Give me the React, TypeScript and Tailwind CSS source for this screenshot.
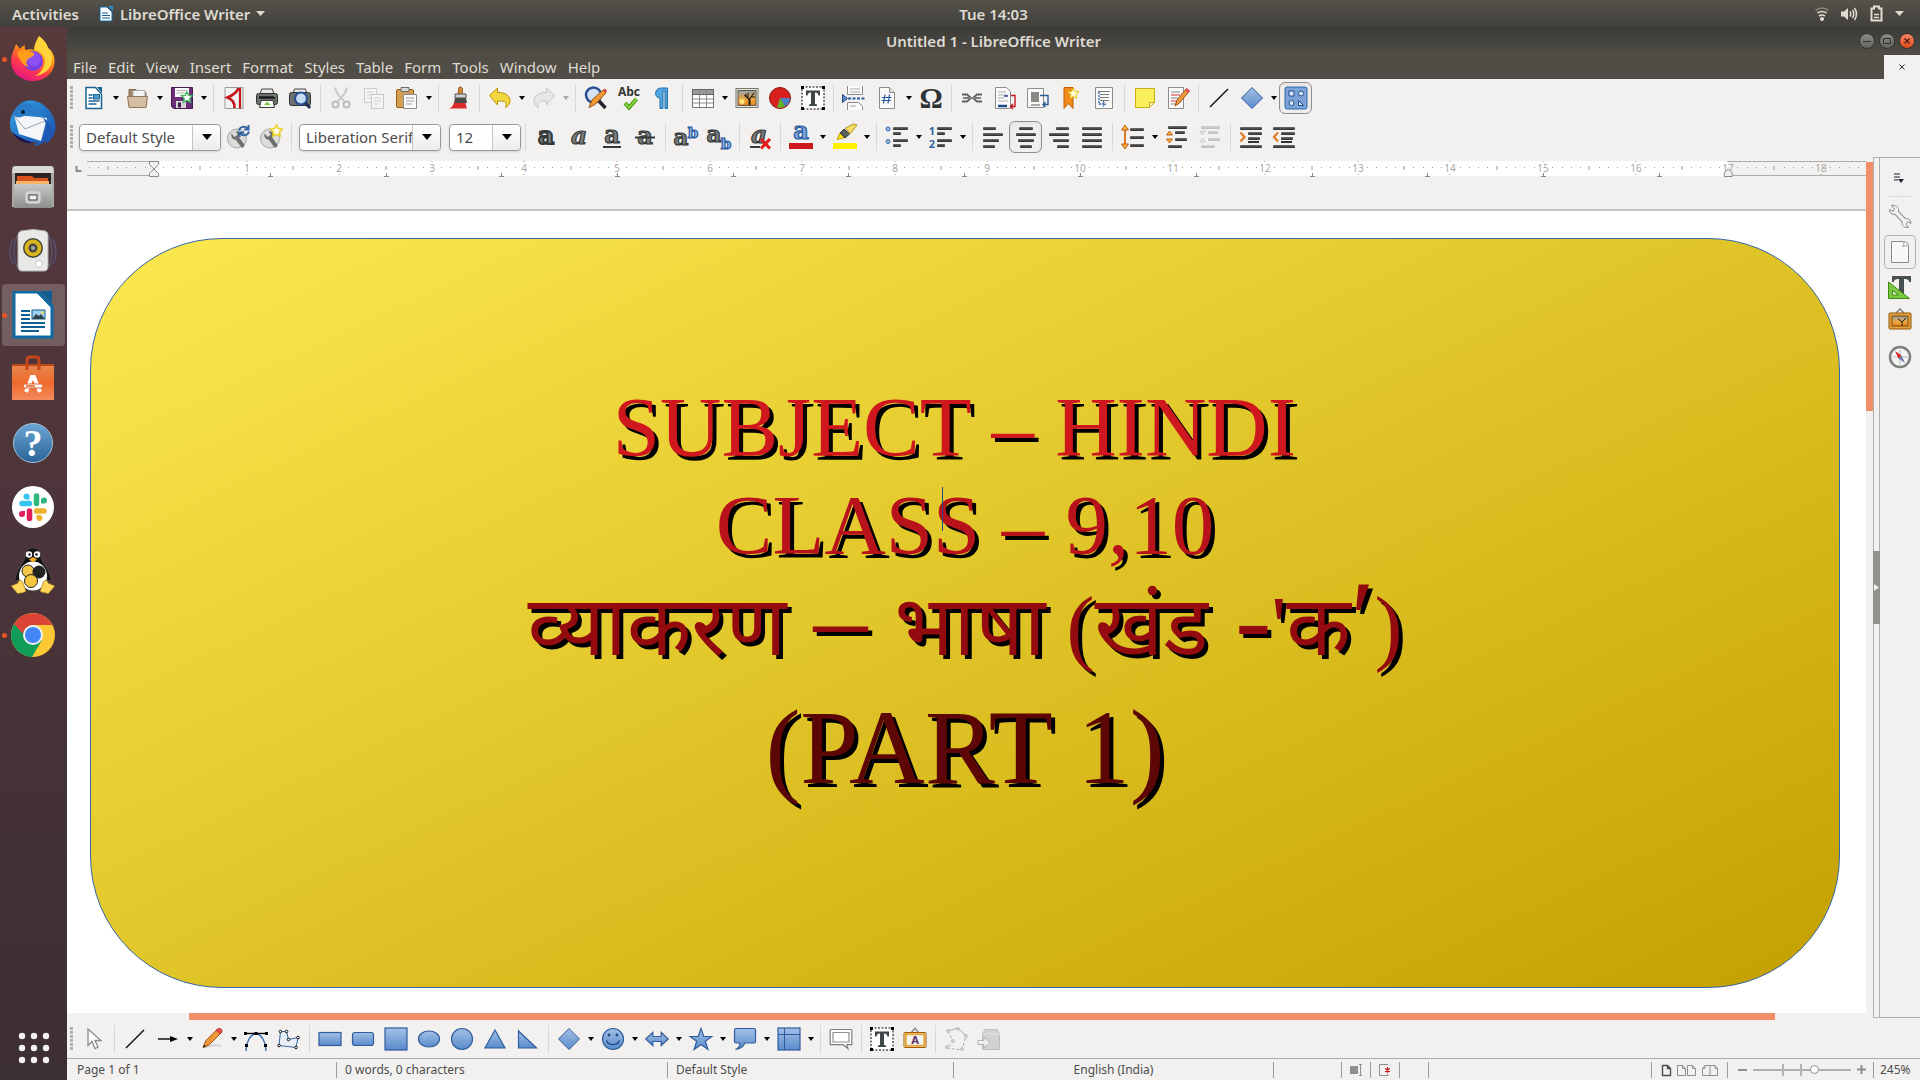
import React from "react";

type Kids = { children?: React.ReactNode };

const Ico = ({ children }: Kids) => (
  <svg width="24" height="24" viewBox="0 0 24 24" fill="none" className="shrink-0 overflow-visible" aria-hidden="true">
    {children}
  </svg>
);

const Defs = () => (
  <svg width="0" height="0" className="absolute" aria-hidden="true">
    <defs>
      <linearGradient id="blue" x1="0" y1="0" x2="0" y2="1">
        <stop offset="0" stopColor="#a3c0e6" />
        <stop offset="1" stopColor="#5a8bcb" />
      </linearGradient>
      <linearGradient id="fox" x1="0.8" y1="0" x2="0.3" y2="1">
        <stop offset="0" stopColor="#fff04a" />
        <stop offset="0.4" stopColor="#ff980e" />
        <stop offset="0.7" stopColor="#ff3a4a" />
        <stop offset="1" stopColor="#e31587" />
      </linearGradient>
      <linearGradient id="bird" x1="0" y1="0" x2="1" y2="1">
        <stop offset="0" stopColor="#2fa5e8" />
        <stop offset="1" stopColor="#1b4aa8" />
      </linearGradient>
      <linearGradient id="steel" x1="0" y1="0" x2="0" y2="1">
        <stop offset="0" stopColor="#c8c8c6" />
        <stop offset="1" stopColor="#8d8d8b" />
      </linearGradient>
      <linearGradient id="bag" x1="0" y1="0" x2="0" y2="1">
        <stop offset="0" stopColor="#e8854c" />
        <stop offset="0.5" stopColor="#ee6a2c" />
        <stop offset="1" stopColor="#f58a5c" />
      </linearGradient>
      <linearGradient id="help" x1="0" y1="0" x2="0" y2="1">
        <stop offset="0" stopColor="#6ba7d6" />
        <stop offset="1" stopColor="#2a6398" />
      </linearGradient>
      <linearGradient id="sky" x1="0" y1="0" x2="0" y2="1">
        <stop offset="0" stopColor="#8f9fa8" />
        <stop offset="0.6" stopColor="#f0a83c" />
        <stop offset="1" stopColor="#e8801c" />
      </linearGradient>
      <linearGradient id="bar" x1="0" y1="0" x2="0" y2="1">
        <stop offset="0" stopColor="#6e6e6e" />
        <stop offset="1" stopColor="#2a2a2a" />
      </linearGradient>
    </defs>
  </svg>
);

/* ---------- document and edit icons ---------- */

const Paper = ({ stroke = "#8c8c8a" }: { stroke?: string }) => (
  <path d="M4.5 1.5h10l5 5v16h-15z" fill="#fafafa" stroke={stroke} />
);

const IconNew = () => (
  <Ico>
    <path d="M4 1.5h9.5l6 6.5v14.500H4z" fill="#fff" stroke="#1a6391" strokeWidth="1.500" />
    <path d="M15 1h5v6z" fill="#1a6391" />
    <path d="M6.500 9h4M6.500 12h4M6.500 15h11M6.500 18h8" stroke="#1a6391" strokeWidth="1.400" />
    <rect x="11.500" y="8.500" width="6" height="4.500" fill="#4f9bd0" stroke="#1a6391" />
  </Ico>
);
const IconOpen = () => (
  <Ico>
    <path d="M3 20V3.500h7l1.500 3H20V20z" fill="#a6866a" stroke="#7d634c" />
    <path d="M7 4.500h12v6H7z" fill="#f2f2f2" stroke="#a8a8a8" />
    <path d="M1.500 10.500h20l-1.500 11H3z" fill="#d3bda3" stroke="#927457" />
  </Ico>
);
const IconSave = () => (
  <Ico>
    <path d="M1.500 1.500h21v21h-19l-2-2z" fill="#6b2f7a" stroke="#451a52" />
    <rect x="5" y="2" width="14" height="9" fill="#f5f5f5" />
    <path d="M6.500 4.500h11M6.500 7h11" stroke="#b5b5b5" />
    <rect x="6" y="15" width="10" height="7" fill="#d5d5d5" />
    <rect x="8" y="16.500" width="3" height="5" fill="#451a52" />
    <path d="m17 6 1.700 3.300 3.800.4-2.800 2.700.8 3.800-3.500-1.800-3.500 1.800.8-3.800-2.800-2.700 3.800-.4z" fill="#fff" stroke="#35b558" strokeWidth="1.300" />
  </Ico>
);
const IconPdf = () => (
  <Ico>
    <path d="M3 1.500h18v21H3z" fill="#f2f2f2" stroke="#9a9a9a" />
    <path d="M16.500 2c-2 5.500-6 7.500-11 9.500 5 2 7.500 5 7 10.500" stroke="#c4161c" strokeWidth="2.600" />
    <path d="M18 2v20.500" stroke="#c4161c" strokeWidth="2.200" />
  </Ico>
);
const IconPrint = () => (
  <Ico>
    <path d="M5 9 6.500 3h11L19 9z" fill="#e9e9e9" stroke="#444" />
    <rect x="1.500" y="7.500" width="21" height="11" rx="2" fill="#6d706c" stroke="#2e3436" />
    <path d="M4 11.500h16" stroke="#171a1a" strokeWidth="2.500" />
    <path d="M6 14.500h12l1.500 7h-15z" fill="#f6fbf2" stroke="#3c3f3c" />
    <path d="m9 19 3-3 4 3z" fill="#71c837" />
    <circle cx="19.500" cy="10" r=".8" fill="#73d216" />
  </Ico>
);
const IconPreview = () => (
  <Ico>
    <path d="M5 8 6.500 3h11L19 8z" fill="#e9e9e9" stroke="#444" />
    <rect x="1.500" y="6.500" width="21" height="13" rx="2" fill="#6d706c" stroke="#2e3436" />
    <circle cx="13" cy="12.500" r="6" fill="#c6dcf2" stroke="#2a4f92" strokeWidth="2.200" />
    <path d="m17.500 17 4.500 5" stroke="#1d2c50" strokeWidth="2.800" />
  </Ico>
);
const IconCut = () => (
  <Ico>
    <path d="M6 1.500c1 5 4 9 9 13.500M18 1.500c-1 5-4 9-9 13.500" stroke="#c9c9c7" strokeWidth="2" />
    <circle cx="6.500" cy="18.500" r="3" stroke="#bdbdbb" strokeWidth="2" />
    <circle cx="17.500" cy="18.500" r="3" stroke="#bdbdbb" strokeWidth="2" />
  </Ico>
);
const IconCopy = () => (
  <Ico>
    <path d="M2.500 2.500h12v14h-12z" fill="#f4f4f3" stroke="#cbcbc9" />
    <path d="M5 6h7M5 9h7M5 12h4" stroke="#cfcfcd" />
    <path d="M9.500 8.500h12v14h-12z" fill="#f4f4f3" stroke="#c6c6c4" />
    <path d="M12 12h7M12 15h7M12 18h5" stroke="#cfcfcd" />
  </Ico>
);
const IconPaste = () => (
  <Ico>
    <rect x="1.500" y="3.500" width="17" height="18" rx="1.500" fill="#d59f52" stroke="#8f5f1c" />
    <path d="M6 1.500h8v4H6z" fill="#d8d8d6" stroke="#6d6d6b" />
    <path d="M8.500 8.500h13v14h-13z" fill="#fafafa" stroke="#8c8c8a" />
    <path d="M11 12h8M11 15h8M11 18h6" stroke="#9a9a98" />
  </Ico>
);
const IconBrush = () => (
  <Ico>
    <path d="M1 22.500c5-.5 5-4 7-8h10c1 4 1 6 2 8z" fill="#dd2a2a" />
    <path d="M12 1.500c1.500-1 4 0 3.500 2l-.5 5h-4z" fill="#d98d37" stroke="#8a4f13" />
    <path d="M8 8h11v4H8z" fill="#d0d0ce" stroke="#555" />
    <path d="M8 12h11l1 5H7z" fill="#4a4a4a" />
  </Ico>
);
const IconUndo = () => (
  <Ico>
    <path d="m1.500 9.500 8-7.500v4.500c8-.5 13 4 12.500 9-.5 3-2.500 5-4.500 6 1.500-4.500 1-7-8-6.500V19z" fill="#f3d740" stroke="#b99500" strokeLinejoin="round" />
  </Ico>
);
const IconRedo = () => (
  <Ico>
    <path d="m22.500 9.500-8-7.500v4.500c-8-.5-13 4-12.500 9 .5 3 2.500 5 4.500 6-1.500-4.500-1-7 8-6.500V19z" fill="#e6e6e4" stroke="#c6c6c4" strokeLinejoin="round" />
  </Ico>
);
const IconFind = () => (
  <Ico>
    <circle cx="9.500" cy="9" r="7.500" fill="#d4e4f4" stroke="#2a4f92" strokeWidth="2.500" />
    <path d="m15 15 6.500 7" stroke="#23262e" strokeWidth="3.500" />
    <path d="M5 21.500 8 14l11-10 3 3-11 11.500z" fill="#f39a34" stroke="#9c5312" />
    <path d="m19 4 2-1.500 2 2L22 7z" fill="#e24b4b" />
  </Ico>
);
const IconSpell = () => (
  <Ico>
    <text x="12" y="10" textAnchor="middle" fontFamily="Open Sans, sans-serif" fontWeight="700" fontSize="12" fill="#333">Abc</text>
    <path d="m8 17 4 4.500 7.500-8.500" stroke="#3f8f10" strokeWidth="4" />
    <path d="m8 17 4 4.500 7.500-8.500" stroke="#84d43a" strokeWidth="2" />
  </Ico>
);
const IconPilcrow = () => (
  <Ico>
    <path d="M17 2H11c-7 0-7 10-1 10v10.500h3V5h2v17.500h2.500V2z" fill="#52a5dd" stroke="#1f6fab" />
  </Ico>
);
const IconTable = () => (
  <Ico>
    <rect x="1.500" y="3.500" width="21" height="18" fill="#fff" stroke="#777" />
    <rect x="1.500" y="3.500" width="21" height="5" fill="#9a9a98" stroke="#666" />
    <path d="M2 13h20M2 17h20M8.500 4v17M15.500 4v17" stroke="#8a8a88" />
  </Ico>
);
const IconImage = () => (
  <Ico>
    <rect x="1" y="2.500" width="22" height="19" fill="#e8e6df" stroke="#77756c" />
    <rect x="3" y="4.500" width="18" height="15" fill="url(#sky)" stroke="#5c5b50" />
    <circle cx="7" cy="15.500" r="2.500" fill="#ffe97a" />
    <path d="M14.500 19v-6" stroke="#221a10" strokeWidth="2" />
    <path d="M14.500 14l-5-5M14.500 13l4.500-6M13 12V7M16 11h4M11 10.500V8" stroke="#221a10" strokeWidth="1.100" />
  </Ico>
);
const IconChart = () => (
  <Ico>
    <circle cx="12" cy="12" r="10.500" fill="#d8201f" stroke="#8f1211" />
    <path d="M12 12h10a10 10 0 0 1-5 8.600z" fill="#4b80c2" />
    <path d="m12 12 5 8.600a10 10 0 0 1-8 1z" fill="#62b52a" />
  </Ico>
);
const IconTextBox = () => (
  <Ico>
    <rect x="1" y="1" width="22" height="22" fill="#fff" stroke="#000" strokeDasharray="2 1.500" />
    <path d="M0 0h3v3H0zM21 0h3v3h-3zM0 21h3v3H0zM21 21h3v3h-3z" fill="#000" />
    <path d="M5 4.500h14v5h-1.500c-.5-2-1-3-3.500-3V18l2 .5v1.500H8v-1.500l2-.5V6.500c-2.500 0-3 1-3.500 3H5z" fill="#3f4648" />
  </Ico>
);
const IconBreak = () => (
  <Ico>
    <path d="M5.500 0v8.500h15V0M5.500 24v-7.500h11l4 4V24" fill="#fafafa" stroke="#8c8c8a" />
    <path d="M8 3h10M8 6h10M8 20h6" stroke="#aaa" />
    <path d="M6 12.500h18" stroke="#2a5a9c" strokeWidth="2" strokeDasharray="3 1.500" />
    <path d="m.5 8.500 5 4-5 4z" fill="#5a8bcb" stroke="#204a87" />
  </Ico>
);
const IconField = () => (
  <Ico>
    <Paper />
    <path d="M14.500 1.500v5h5" fill="#dedede" stroke="#8c8c8a" />
    <path d="m10 8.500-1.500 9M14.500 8.500 13 17.500M7 11.500h9.500M6.500 14.500H16" stroke="#2a5a9c" strokeWidth="1.200" />
  </Ico>
);
const IconOmega = () => (
  <Ico>
    <text x="12" y="22" textAnchor="middle" fontFamily="Liberation Serif, serif" fontWeight="700" fontSize="29" fill="#2e3436">Ω</text>
  </Ico>
);
const IconLink = () => (
  <Ico>
    <path d="M2 8.500h5l4 3.500-4 3.500H2M22 8.500h-5L13 12l4 3.500h5" stroke="#5e6160" strokeWidth="1.800" />
    <path d="M3 12h18" stroke="#7c7f7c" strokeWidth="2" />
  </Ico>
);
const IconFootnote = () => (
  <Ico>
    <path d="M2.500 1.500h11l4 4v17h-15z" fill="#fafafa" stroke="#8c8c8a" />
    <path d="M5 6h8M5 9h10M5 12h6M5 15h10" stroke="#aaa" />
    <path d="M11 10h4" stroke="#204a87" strokeWidth="1.500" />
    <path d="M5 20h9" stroke="#204a87" strokeWidth="2.500" />
    <path d="M18 9.500h4v11h-4.500m2.500-2.500-2.500 2.500L20 23" stroke="#c4161c" strokeWidth="1.400" />
  </Ico>
);
const IconEndnote = () => (
  <Ico>
    <path d="M1.500 2.500h16v19h-16z" fill="#fafafa" stroke="#8c8c8a" />
    <rect x="5" y="6" width="8" height="10" fill="#888a85" />
    <path d="M5 19h9" stroke="#aaa" strokeWidth="2" />
    <path d="M14 9.500h8v9h-5m2.500-2.500-2.500 2.500 2.500 2.500" stroke="#2a5a9c" strokeWidth="1.400" />
  </Ico>
);
const IconBookmark = () => (
  <Ico>
    <path d="M5 1.500h9v21l-4.500-5-4.500 5z" fill="#f08a1d" stroke="#c45f00" />
    <path d="m14.500 2 1.700 3.300 3.800.5-2.800 2.700.7 3.800-3.400-1.800-3.400 1.800.7-3.800L9 5.800l3.800-.5z" fill="#fffbd0" stroke="#e2c200" />
  </Ico>
);
const IconCrossRef = () => (
  <Ico>
    <path d="M3.500 1.500h17v21h-17z" fill="#fafafa" stroke="#8c8c8a" />
    <path d="M6 5.500h12M8 8.500h9M8 11.500h9M8 14.500h9" stroke="#777" />
    <path d="M7 6v12h6m-2-2.500 2.500 2.500L11 20.500" stroke="#2a5a9c" strokeWidth="1.300" strokeDasharray="2 1" />
  </Ico>
);
const IconNote = () => (
  <Ico>
    <path d="M2.500 2.500h19v14l-5 5h-14z" fill="#f9ee5c" stroke="#c9ad14" />
    <path d="M21.500 16.500h-5v5z" fill="#fdf8b5" stroke="#c9ad14" />
  </Ico>
);
const IconTrack = () => (
  <Ico>
    <path d="M2.500 1.500h15v21h-15z" fill="#fafafa" stroke="#8c8c8a" />
    <path d="M5 6h9M5 12h7M5 18h7" stroke="#888" />
    <path d="M5 9h9M5 15h6" stroke="#d33" />
    <path d="m9 20 2-6L20 3l3 2.500L13.500 17z" fill="#f09a3c" stroke="#9c5312" />
    <path d="m19 4 1.500-2L24 4.500 22.500 7z" fill="#e24b4b" />
  </Ico>
);
const IconLine = () => (
  <Ico>
    <path d="M3 21 21 3" stroke="#111" strokeWidth="1.400" />
  </Ico>
);
const IconDiamond = () => (
  <Ico>
    <path d="m12 1.500 10.500 10.500L12 22.500 1.500 12z" fill="url(#blue)" stroke="#2f5c9c" />
  </Ico>
);
const IconShapes = () => (
  <Ico>
    <rect x="1" y="1" width="22" height="22" rx="2" fill="#7ba3d9" stroke="#3465a4" />
    <path d="M5 5h5v5H5zM14.500 19.500v-5l5 5z" fill="#dce9f8" stroke="#204a87" />
    <circle cx="17" cy="7.500" r="2.500" fill="#dce9f8" stroke="#204a87" />
    <circle cx="7.500" cy="17" r="2.500" fill="#dce9f8" stroke="#204a87" />
  </Ico>
);

/* ---------- formatting icons ---------- */

const glyph = {
  fontFamily: "DejaVu Serif, Liberation Serif, serif",
  fontWeight: 700,
  textAnchor: "middle" as const,
  fill: "#7b7e7d",
  stroke: "#34383a",
  strokeWidth: 1.2,
};

const IconStyle = ({ add }: { add?: boolean }) => (
  <Ico>
    <circle cx="11" cy="13.500" r="9.500" fill="#dcdcda" stroke="#a5a5a3" />
    <path d="m11 13 5.500 7.500" stroke="#6d6f6e" strokeWidth="4" strokeLinecap="round" />
    <path d="M5.500 8.500c-1 4 2 7 6 6l2.500-3c1-3-1-5.500-4-5.500l1.500 4-3 2z" fill="#6d6f6e" />
    {add ? (
      <path d="m17.500 0 1.900 3.400 3.900.8-2.700 2.900.5 3.900-3.600-1.700-3.600 1.700.5-3.900-2.700-2.900 3.900-.8z" fill="#fffce0" stroke="#e6cf1c" strokeWidth="1.500" />
    ) : (
      <path d="M13 5.500c1-4 6-5 8.500-2M22.500 0v4.500H18M23 6.500c-1 4-6 5-8.500 2M13.500 12V7.500H18" stroke="#3465a4" strokeWidth="2" />
    )}
  </Ico>
);
const IconBold = () => (
  <Ico>
    <text x="12" y="19" fontSize="25" {...glyph} strokeWidth={2}>a</text>
  </Ico>
);
const IconItalic = () => (
  <Ico>
    <text x="12" y="19" fontSize="25" {...glyph} fontStyle="italic">a</text>
  </Ico>
);
const IconUnder = () => (
  <Ico>
    <text x="12" y="18" fontSize="24" {...glyph}>a</text>
    <path d="M3 22h18" stroke="#34383a" strokeWidth="2" />
  </Ico>
);
const IconStrike = () => (
  <Ico>
    <text x="12" y="19" fontSize="24" {...glyph}>a</text>
    <path d="M2 12.500h20" stroke="#34383a" strokeWidth="2" />
  </Ico>
);
const IconSup = () => (
  <Ico>
    <text x="7" y="20" fontSize="23" {...glyph}>a</text>
    <text x="19" y="13" fontSize="15" {...glyph} fill="#9cc0ea" stroke="#2a5a9c">b</text>
  </Ico>
);
const IconSub = () => (
  <Ico>
    <text x="7" y="17" fontSize="23" {...glyph}>a</text>
    <text x="19" y="24" fontSize="15" {...glyph} fill="#9cc0ea" stroke="#2a5a9c">b</text>
  </Ico>
);
const IconClear = () => (
  <Ico>
    <text x="11" y="18" fontSize="25" {...glyph} fontStyle="italic">a</text>
    <path d="M2 22h10" stroke="#34383a" strokeWidth="2" />
    <path d="m13 14 9 9.500M22 14l-9 9.500" stroke="#e0201f" strokeWidth="3.200" />
  </Ico>
);
const IconFontColor = () => (
  <Ico>
    <text x="12" y="14" fontSize="24" {...glyph} fill="#7ba3d9" stroke="#2a5a9c">a</text>
    <path d="M0 18h24v6H0z" fill="#ce181e" />
  </Ico>
);
const IconHighlight = () => (
  <Ico>
    <path d="M4 14.500 7 8l5 4.500z" fill="#fbe50a" stroke="#b3a000" />
    <path d="m7 8 4-4 5.500 5-4.500 4z" fill="#5a5d5b" stroke="#333" />
    <path d="m12 3.500 8-4.500 4 1-6.500 8.500z" fill="#f5dc6a" stroke="#b3961a" />
    <path d="M0 18h24v6H0z" fill="#fff200" />
  </Ico>
);
const bars = (rows: [number, number, number][]) =>
  rows.map(([x, y, w]) => <rect key={y} x={x} y={y} width={w} height="3" rx="1" fill="url(#bar)" />);
const IconBullets = () => (
  <Ico>
    <circle cx="3" cy="4" r="2" fill="#9cc0ea" stroke="#3465a4" />
    <circle cx="3" cy="16.500" r="2" fill="#9cc0ea" stroke="#3465a4" />
    {bars([[8, 2, 15], [8, 7, 8], [8, 14, 15], [8, 19, 8]])}
  </Ico>
);
const IconNumbers = () => (
  <Ico>
    <text x="3" y="10" textAnchor="middle" fontFamily="Open Sans, sans-serif" fontWeight="700" fontSize="11" fill="#3465a4">1</text>
    <text x="3" y="23" textAnchor="middle" fontFamily="Open Sans, sans-serif" fontWeight="700" fontSize="11" fill="#3465a4">2</text>
    {bars([[8, 2, 15], [8, 7, 8], [8, 14, 15], [8, 19, 8]])}
  </Ico>
);
const IconLeft = () => <Ico>{bars([[2, 2, 13], [2, 8, 20], [2, 14, 16], [2, 20, 12]])}</Ico>;
const IconCenter = () => <Ico>{bars([[5, 2, 14], [2, 8, 20], [4, 14, 16], [6, 20, 12]])}</Ico>;
const IconRight = () => <Ico>{bars([[9, 2, 13], [2, 8, 20], [6, 14, 16], [10, 20, 12]])}</Ico>;
const IconJustify = () => <Ico>{bars([[2, 2, 20], [2, 8, 20], [2, 14, 20], [2, 20, 20]])}</Ico>;
const IconSpacing = () => (
  <Ico>
    <path d="M4 5v14" stroke="#d9772b" strokeWidth="2" />
    <path d="M4 0 7.500 5H.5zM4 24l3.500-5H.5z" fill="#fcaf3e" stroke="#c4621a" />
    {bars([[9, 3, 14], [9, 11, 14], [9, 19, 14]])}
  </Ico>
);
const IconParaUp = () => (
  <Ico>
    {bars([[3, 1, 19], [10, 6, 10], [10, 13, 12], [3, 20, 14]])}
    <path d="m4.500 6 3 4h-6zM4.500 18l3-4h-6z" fill="#fcaf3e" stroke="#c4621a" />
  </Ico>
);
const IconParaDown = () => (
  <Ico>
    <g opacity=".25">
      {bars([[3, 1, 19], [10, 6, 10], [10, 13, 12], [3, 20, 14]])}
      <path d="m4.500 10 3-4h-6zM4.500 13l3 4h-6z" fill="#bbb" stroke="#777" />
    </g>
  </Ico>
);
const IconIndent = () => (
  <Ico>
    {bars([[1, 2, 22], [9, 7, 14], [9, 12, 12], [1, 20, 22]])}
    <path d="M9 17h11" stroke="#333" strokeWidth="2" />
    <path d="m1.500 7.500 4 4.500-4 4.500" stroke="#e07a20" strokeWidth="2.200" />
  </Ico>
);
const IconOutdent = () => (
  <Ico>
    {bars([[1, 2, 22], [9, 7, 14], [9, 12, 12], [1, 20, 22]])}
    <path d="M9 17h11" stroke="#333" strokeWidth="2" />
    <path d="m6 7.500-4 4.500 4 4.500" stroke="#e07a20" strokeWidth="2.200" />
  </Ico>
);

/* ---------- drawing icons ---------- */

const blue = { fill: "url(#blue)", stroke: "#2f5c9c", strokeWidth: 1.2 };
const IconPointer = () => (
  <Ico>
    <path d="M6 2v16.500l4-4 3 7 3-1.500-3-6.500h6z" fill="#fff" stroke="#8a8c89" strokeWidth="1.300" />
  </Ico>
);
const IconArrow = () => (
  <Ico>
    <path d="M2 12h14" stroke="#000" strokeWidth="1.400" />
    <path d="m14 9 8 3-8 3z" fill="#000" />
  </Ico>
);
const IconPencil = () => (
  <Ico>
    <path d="M4 21c6-2 10-4 17-2" stroke="#bbb" />
    <path d="m3 20.500 3-7L17.500 2l4 3.500-12 12z" fill="#f2973a" stroke="#9c5312" />
    <path d="m16 3.500 2-2c2-1 5 1 4 3.500l-2 2z" fill="#e24b4b" stroke="#a33" strokeWidth=".6" />
    <path d="m3 20.500 1-3 2 1.800z" fill="#222" />
  </Ico>
);
const IconCurve = () => (
  <Ico>
    <path d="M2 24c0-8 4-17 10-17s10 9 10 17" stroke="#3465a4" strokeWidth="1.300" />
    <path d="M1 6.500h22" stroke="#000" strokeWidth="1.400" />
    <path d="M0 5h3v3H0zM10.500 5h3v3h-3zM21 5h3v3h-3zM1 17h3v3H1zM20 17h3v3h-3z" fill="#000" />
  </Ico>
);
const nodes = (pts: number[][], color: string) =>
  pts.map(([x, y]) => <circle key={x + "-" + y} cx={x} cy={y} r="1.300" fill="#fff" stroke={color} />);
const IconPolygon = () => (
  <Ico>
    <path d="M3.500 4.500h6l2 8 9.500-2-2 10-17-2z" fill="#e8eef6" stroke="#3465a4" />
    {nodes([[3.5, 4.5], [9.5, 4.5], [11.5, 12.5], [21, 10.5], [19, 20.5], [2, 18.5]], "#111")}
  </Ico>
);
const IconRect = () => <Ico><rect x="1" y="5.500" width="22" height="13" {...blue} /></Ico>;
const IconRRect = () => <Ico><rect x="1.500" y="5.500" width="21" height="13" rx="2.500" {...blue} /></Ico>;
const IconSquare = () => <Ico><rect x="1" y="1" width="22" height="22" {...blue} /></Ico>;
const IconEllipse = () => <Ico><ellipse cx="12" cy="12" rx="10.500" ry="8" {...blue} /></Ico>;
const IconCircle = () => <Ico><circle cx="12" cy="12" r="10.500" {...blue} /></Ico>;
const IconTriangle = () => <Ico><path d="m12 3 10 18H2z" {...blue} /></Ico>;
const IconRTriangle = () => <Ico><path d="M2.500 4v17h18z" {...blue} /></Ico>;
const IconSmiley = () => (
  <Ico>
    <circle cx="12" cy="12" r="10.500" {...blue} />
    <path d="M5.500 13.500c2 5.500 11 5.500 13 0" stroke="#204a87" strokeWidth="1.400" />
    <circle cx="8" cy="8" r="1.400" fill="#204a87" />
    <circle cx="16" cy="8" r="1.400" fill="#204a87" />
  </Ico>
);
const IconDoubleArrow = () => (
  <Ico>
    <path d="m.8 12 7-6.500V9.500h8.400V5.500l7 6.500-7 6.500v-4H7.800v4z" {...blue} />
  </Ico>
);
const IconStar = () => (
  <Ico>
    <path d="m12 1.500 2.800 8h8l-6.500 4.800 2.600 8.200-6.900-5-6.900 5 2.600-8.200L1.200 9.500h8z" {...blue} />
  </Ico>
);
const IconCallout = () => (
  <Ico>
    <path d="M3 1.500h18q1.500 0 1.500 1.500v11.500q0 1.500-1.500 1.500h-9c-2 4-5 6-9.500 6.500C6 21 7 19 7 16H3q-1.500 0-1.500-1.500V3q0-1.500 1.500-1.500z" {...blue} />
  </Ico>
);
const IconFlow = () => (
  <Ico>
    <rect x="1" y="1" width="22" height="22" {...blue} />
    <path d="M7.500 1v22M1 7.500h22" stroke="#2f5c9c" />
  </Ico>
);
const IconBubble = () => (
  <Ico>
    <path d="M2 2.500h20q.8 0 .8.800v14.400h-5l1.200 4-5-4H1.200V3.300q0-.8.800-.8z" fill="#fff" stroke="#7d807c" strokeWidth="1.200" />
    <path d="M4 5.500h16v9.500H4z" fill="#fff" stroke="#8d908c" strokeWidth="1.200" />
  </Ico>
);
const IconFontwork = () => (
  <Ico>
    <path d="m8 6 4-5 4 5" stroke="#888" strokeWidth="1.300" />
    <rect x="1" y="5.500" width="22" height="15" rx="1" fill="#f5f5f5" stroke="#a05a00" />
    <rect x="2.800" y="7.200" width="18.400" height="11.600" stroke="#eaa83c" strokeWidth="2" />
    <text x="12" y="17" textAnchor="middle" fontFamily="DejaVu Sans, sans-serif" fontWeight="700" fontSize="10" fill="#5c3566">A</text>
  </Ico>
);
const IconPoints = () => (
  <Ico>
    <path d="m4 4 10-3 8 8" stroke="#aaa" />
    <path d="m4 4 5 10-6 7 15 2 4-14" stroke="#aaa" strokeDasharray="3 2" />
    {nodes([[4, 4], [14, 2], [22, 9], [9, 14], [3, 20], [18, 22]], "#aaa")}
  </Ico>
);
const IconExtrude = () => (
  <Ico>
    <path d="M5.500 7 8 2.500h12L22.500 7v15.500h-17z" fill="#d2d2d0" stroke="#bdbdbb" />
    <path d="M5.500 7h17" stroke="#e4e4e2" />
    <path d="M1 13.500h6V10l6 5.500-6 5.500v-3.500H1z" fill="#f0f0ee" stroke="#b5b5b3" />
  </Ico>
);

/* ---------- toolbars ---------- */

const Caret = ({ dim }: { dim?: boolean }) => (
  <span className="flex w-[11px] items-center justify-center">
    <svg width="6" height="4" viewBox="0 0 6 4" aria-hidden="true">
      <path d="M0 0h6L3 4z" fill={dim ? "#aaa" : "#000"} />
    </svg>
  </span>
);
const Tool = ({ label, on, menu, dim, children }: Kids & { label: string; on?: boolean; menu?: boolean; dim?: boolean }) => (
  <button type="button" aria-label={label} aria-pressed={on} className="flex h-8 shrink-0 items-center">
    <span
      className={
        on
          ? "flex h-8 w-[33px] items-center justify-center rounded-md border border-[#8f8f8d] bg-[#f0efee] shadow-inner"
          : "flex h-8 w-[33px] items-center justify-center"
      }
    >
      {children}
    </span>
    {menu && <Caret dim={dim} />}
  </button>
);
const Sep = () => (
  <span className="flex w-2 shrink-0 justify-center">
    <span className="h-7 w-px bg-[#d9d8d6]" />
  </span>
);
const Grip = () => (
  <span className="mr-1 h-6 w-[3px] shrink-0 bg-[repeating-linear-gradient(to_bottom,#b1b0ae_0_3px,transparent_3px_4px)]" />
);
const Combo = ({ label, value, className }: { label: string; value: string; className: string }) => (
  <div className={"flex h-[27px] shrink-0 rounded border border-[#9b9a98] bg-white shadow-sm " + className}>
    <select aria-label={label} className="min-w-0 flex-1 appearance-none bg-transparent pl-1.5 text-[15px] leading-6 text-[#4c4c4c] outline-none">
      <option>{value}</option>
    </select>
    <span className="flex w-[28px] items-center justify-center rounded-r border-l border-[#c4c3c1] bg-gradient-to-b from-white to-[#ececea]">
      <svg width="10" height="6" viewBox="0 0 10 6" aria-hidden="true">
        <path d="M0 0h10L5 6z" fill="#000" />
      </svg>
    </span>
  </div>
);

const StandardBar = () => (
  <div className="flex h-[38px] items-center pl-[3px]" role="toolbar" aria-label="Standard">
    <Grip />
    <Tool label="New" menu><IconNew /></Tool>
    <Tool label="Open" menu><IconOpen /></Tool>
    <Tool label="Save" menu><IconSave /></Tool>
    <Sep />
    <Tool label="Export as PDF"><IconPdf /></Tool>
    <Tool label="Print"><IconPrint /></Tool>
    <Tool label="Print Preview"><IconPreview /></Tool>
    <Sep />
    <Tool label="Cut"><IconCut /></Tool>
    <Tool label="Copy"><IconCopy /></Tool>
    <Tool label="Paste" menu><IconPaste /></Tool>
    <Sep />
    <Tool label="Clone Formatting"><IconBrush /></Tool>
    <Sep />
    <Tool label="Undo" menu><IconUndo /></Tool>
    <Tool label="Redo" menu dim><IconRedo /></Tool>
    <Sep />
    <Tool label="Find and Replace"><IconFind /></Tool>
    <Tool label="Spelling"><IconSpell /></Tool>
    <Tool label="Formatting Marks"><IconPilcrow /></Tool>
    <Sep />
    <Tool label="Insert Table" menu><IconTable /></Tool>
    <Tool label="Insert Image"><IconImage /></Tool>
    <Tool label="Insert Chart"><IconChart /></Tool>
    <Tool label="Insert Text Box"><IconTextBox /></Tool>
    <Sep />
    <Tool label="Insert Page Break"><IconBreak /></Tool>
    <Tool label="Insert Field" menu><IconField /></Tool>
    <Tool label="Insert Special Character"><IconOmega /></Tool>
    <Sep />
    <Tool label="Insert Hyperlink"><IconLink /></Tool>
    <Tool label="Insert Footnote"><IconFootnote /></Tool>
    <Tool label="Insert Endnote"><IconEndnote /></Tool>
    <Tool label="Insert Bookmark"><IconBookmark /></Tool>
    <Tool label="Insert Cross-reference"><IconCrossRef /></Tool>
    <Sep />
    <Tool label="Insert Comment"><IconNote /></Tool>
    <Tool label="Track Changes"><IconTrack /></Tool>
    <Sep />
    <Tool label="Line"><IconLine /></Tool>
    <Tool label="Basic Shapes" menu><IconDiamond /></Tool>
    <Tool label="Show Draw Functions" on><IconShapes /></Tool>
  </div>
);

const FormatBar = () => (
  <div className="flex h-10 items-center pl-[3px]" role="toolbar" aria-label="Formatting">
    <Grip />
    <Combo label="Paragraph Style" value="Default Style" className="ml-0.5 w-[142px]" />
    <Tool label="Update Style"><IconStyle /></Tool>
    <Tool label="New Style"><IconStyle add /></Tool>
    <Sep />
    <Combo label="Font Name" value="Liberation Serif" className="ml-1 mr-2 w-[142px]" />
    <Combo label="Font Size" value="12" className="w-[72px]" />
    <Sep />
    <Tool label="Bold"><IconBold /></Tool>
    <Tool label="Italic"><IconItalic /></Tool>
    <Tool label="Underline"><IconUnder /></Tool>
    <Tool label="Strikethrough"><IconStrike /></Tool>
    <Sep />
    <Tool label="Superscript"><IconSup /></Tool>
    <Tool label="Subscript"><IconSub /></Tool>
    <Sep />
    <Tool label="Clear Formatting"><IconClear /></Tool>
    <Sep />
    <Tool label="Font Color" menu><IconFontColor /></Tool>
    <Tool label="Highlighting" menu><IconHighlight /></Tool>
    <Sep />
    <Tool label="Bullets" menu><IconBullets /></Tool>
    <Tool label="Numbering" menu><IconNumbers /></Tool>
    <Sep />
    <Tool label="Align Left"><IconLeft /></Tool>
    <Tool label="Center" on><IconCenter /></Tool>
    <Tool label="Align Right"><IconRight /></Tool>
    <Tool label="Justified"><IconJustify /></Tool>
    <Sep />
    <Tool label="Line Spacing" menu><IconSpacing /></Tool>
    <Tool label="Increase Paragraph Spacing"><IconParaUp /></Tool>
    <Tool label="Decrease Paragraph Spacing"><IconParaDown /></Tool>
    <Sep />
    <Tool label="Increase Indent"><IconIndent /></Tool>
    <Tool label="Decrease Indent"><IconOutdent /></Tool>
  </div>
);

const DrawBar = () => (
  <div className="flex h-[38px] items-center pl-[3px]" role="toolbar" aria-label="Drawing">
    <Grip />
    <Tool label="Select"><IconPointer /></Tool>
    <Sep />
    <Tool label="Insert Line"><IconLine /></Tool>
    <Tool label="Lines and Arrows" menu><IconArrow /></Tool>
    <Tool label="Curves" menu><IconPencil /></Tool>
    <Tool label="Curve"><IconCurve /></Tool>
    <Tool label="Polygon"><IconPolygon /></Tool>
    <Sep />
    <Tool label="Rectangle"><IconRect /></Tool>
    <Tool label="Rounded Rectangle"><IconRRect /></Tool>
    <Tool label="Square"><IconSquare /></Tool>
    <Tool label="Ellipse"><IconEllipse /></Tool>
    <Tool label="Circle"><IconCircle /></Tool>
    <Tool label="Triangle"><IconTriangle /></Tool>
    <Tool label="Right Triangle"><IconRTriangle /></Tool>
    <Sep />
    <Tool label="Diamond" menu><IconDiamond /></Tool>
    <Tool label="Symbol Shapes" menu><IconSmiley /></Tool>
    <Tool label="Block Arrows" menu><IconDoubleArrow /></Tool>
    <Tool label="Stars" menu><IconStar /></Tool>
    <Tool label="Callouts" menu><IconCallout /></Tool>
    <Tool label="Flowchart" menu><IconFlow /></Tool>
    <Sep />
    <Tool label="Callout"><IconBubble /></Tool>
    <Sep />
    <Tool label="Text Box"><IconTextBox /></Tool>
    <Tool label="Fontwork"><IconFontwork /></Tool>
    <Sep />
    <Tool label="Points"><IconPoints /></Tool>
    <Tool label="Toggle Extrusion"><IconExtrude /></Tool>
  </div>
);

/* ---------- ruler ---------- */

const UNIT = 92.6;
const ZERO = 87;
const END = ZERO + 17 * UNIT;
const Ruler = () => {
  const ticks: React.ReactNode[] = [];
  for (let i = -7; i < 187; i++) {
    const x = Math.round(ZERO + (i * UNIT) / 10);
    if (i === 0) continue;
    if (i % 10 === 0) {
      ticks.push(
        <g key={i}>
          <path d={`M${x} 0v1M${x} 13v1`} stroke="#999" />
          <text x={x} y="11" textAnchor="middle" fontSize="10" fill="#a5a29d" fontFamily="Open Sans, sans-serif">{i / 10}</text>
        </g>
      );
    } else if (i % 5 === 0) ticks.push(<path key={i} d={`M${x} 5v4`} stroke="#999" />);
    else ticks.push(<rect key={i} x={x} y="6" width="1" height="1" fill="#999" />);
  }
  const tabs: React.ReactNode[] = [];
  for (let i = 1; i < 14; i++) {
    const x = Math.round(ZERO + i * UNIT * 1.25);
    tabs.push(<path key={i} d={`M${x - 2} 15.500h5M${x + 0.5} 12v3`} stroke="#8c8a87" />);
  }
  return (
    <div className="h-4 overflow-hidden">
      <svg width="1799" height="17" viewBox="0 0 1799 17" fill="none" aria-label="Ruler" role="img">
        <rect x={ZERO} y="0" width={17 * UNIT} height="15" fill="#fff" />
        <path d={`M20 .5H${ZERO}M20 14.500H${ZERO}M${END} .5H1799M${END} 14.500H1799`} stroke="#aeadab" />
        <path d="M9.500 5v5h5" stroke="#8c8a87" strokeWidth="2" />
        {ticks}
        {tabs}
        <path d={`M${ZERO - 4.5} .5h9v3l-9 9v3h9v-3l-9-9z`} fill="#f2f1f0" stroke="#8c8a87" />
        <path d={`M${END - 4} 15.500h8v-3.500l-4-4-4 4z`} fill="#f2f1f0" stroke="#8c8a87" />
      </svg>
    </div>
  );
};

/* ---------- dock ---------- */

const Big = ({ children }: Kids) => (
  <svg width="48" height="48" viewBox="0 0 48 48" fill="none" aria-hidden="true">{children}</svg>
);
const Firefox = () => (
  <Big>
    <path d="M30 1c5 4 8 8 9 12 5 3 8 10 6 18-2 8-10 15-21 15S2 38 2 26c0-6 3-11 5-17l4 5c1-2 3-3 5-4-1 3 0 4 1 5 3-1 6-1 8 0 0-4 2-9 5-14z" fill="url(#fox)" />
    <path d="M31 2c-4 4-6 9-5 13 5 1 9 4 10 10 0 7-4 13-10 16 8-1 15-6 17-14 1-6-1-11-4-14-1-4-4-8-8-11z" fill="#ffd43a" />
    <circle cx="24" cy="26" r="10" fill="#7a3fe0" />
    <circle cx="25" cy="24" r="7" fill="#9a5bff" opacity=".6" />
    <path d="M8 18c3-3 9-4 13-1 3 0 5 1 4 3s-4 2-6 4c-3 3-1 6 1 8-6-1-8-5-12-14z" fill="#ff9d1c" />
  </Big>
);
const Thunderbird = () => (
  <Big>
    <path d="M14 3c6-3 16-2 23 5 8 7 12 18 8 27-2 5-5 8-9 10l1-4c-4 4-9 6-12 6l3-4C12 45 1 38 1 25 1 18 4 12 9 8c1-2 3-4 5-5z" fill="url(#bird)" />
    <path d="M5 16l24 2 9 1-6 23-22-7z" fill="#f4f6f8" />
    <path d="m5 17 11 13 20-8" stroke="#9aa6b2" />
    <path d="M14 3c8 1 14 6 19 15-6-3-12-4-18-1-4 2-8 2-11-1 0-5 5-10 10-13z" fill="#2a7cc9" />
    <path d="M33 18c6 6 6 16 0 24 4-2 8-6 10-10-1-6-5-11-10-14z" fill="#1c57b4" />
    <circle cx="14" cy="13" r="2" fill="#123" />
    <path d="M3 33c4 8 12 12 22 11-6-2-15-5-22-11z" fill="#1c1450" />
  </Big>
);
const Files = () => (
  <Big>
    <path d="M3 6q0-3 3-3h36q3 0 3 3v38H3z" fill="#a9a9a7" />
    <path d="M4 5q1-2 3-2h34q2 0 3 2l1 5H3z" fill="#d9d9d7" />
    <rect x="6" y="10" width="36" height="14" fill="#2b2420" />
    <path d="M8 13h15l2 2h14v8H8z" fill="#d9531e" />
    <path d="M7 18h33v5H7z" fill="#f7b469" />
    <path d="M5 21h38v24H5z" fill="url(#steel)" />
    <rect x="17" y="29" width="14" height="11" rx="2" fill="#c9c9c7" stroke="#e3e3e1" />
    <rect x="20" y="32" width="8" height="5" fill="#eee" stroke="#444" />
  </Big>
);
const Rhythmbox = () => (
  <Big>
    <path d="M4 12c-4 8-4 18 0 25M8 9C4 18 4 30 8 40M44 12c4 8 4 18 0 25M40 9c4 9 4 21 0 31" stroke="#5a6fa8" strokeWidth="1.500" opacity=".5" />
    <path d="M12 4q12-3 24 0 3 1 3 4v31q0 5-4 5H13q-4 0-4-5V8q0-3 3-4z" fill="#e8e8e6" stroke="#b5b5b3" />
    <circle cx="24" cy="21" r="10" fill="#46443a" />
    <circle cx="24" cy="21" r="8.500" fill="#d9b71c" />
    <circle cx="24" cy="21" r="4.500" fill="#4b4a45" />
    <circle cx="24" cy="21" r="2" fill="#aaa" />
    <circle cx="30" cy="37" r="3.500" fill="#fff" stroke="#c5c5c3" />
  </Big>
);
const Writer = () => (
  <Big>
    <path d="M5 1h24l14 14v31H5z" fill="#fff" stroke="#0e6aa4" strokeWidth="3" />
    <path d="M31 0h12v12z" fill="#0e5f96" />
    <path d="M27 1h4l13 13v5z" fill="#0e6aa4" />
    <path d="M12 20h9M12 24h9M12 28h9M12 32h24M12 36h24M12 40h18" stroke="#0e5f96" strokeWidth="2" />
    <rect x="23" y="19" width="13" height="9" fill="#9fd0ef" stroke="#0e5f96" />
    <path d="m23 28 4-5 3 2 2-2 4 5z" fill="#33434c" />
    <circle cx="33.500" cy="21.500" r="1.500" fill="#f7d35a" />
  </Big>
);
const Software = () => (
  <Big>
    <path d="M3 9h42v3H3z" fill="#b84a1c" />
    <path d="M3 11h42v34H3z" fill="url(#bag)" />
    <path d="M18 15V5q0-3 3-3h6q3 0 3 3v10" stroke="#c4471a" strokeWidth="3" />
    <path d="m17 37 6-15h2l6 15" stroke="#fff" strokeWidth="4" />
    <rect x="14" y="29" width="20" height="4" rx="2" fill="#fff" stroke="#e0602a" />
    <path d="M17 31h9" stroke="#e0602a" strokeWidth="1.500" />
  </Big>
);
const HelpIcon = () => (
  <Big>
    <circle cx="24" cy="24" r="19.500" fill="url(#help)" stroke="#a7bfd2" />
    <text x="24" y="37" textAnchor="middle" fontFamily="Liberation Serif, serif" fontWeight="700" fontSize="38" fill="#fff">?</text>
  </Big>
);
const Slack = () => (
  <Big>
    <circle cx="24" cy="24" r="21" fill="#fff" />
    <g strokeLinecap="round" strokeWidth="5.500">
      <path d="M13 20.500h7.500" stroke="#36c5f0" />
      <path d="M27.500 13v7.500" stroke="#2eb67d" />
      <path d="M27.500 28H35" stroke="#ecb22e" />
      <path d="M20.500 28v7.500" stroke="#e01e5a" />
    </g>
    <path d="M20.500 16.500h-3a3 3 0 1 1 3-3z" fill="#36c5f0" />
    <path d="M32 20.500v-3a3 3 0 1 1 3 3z" fill="#2eb67d" />
    <path d="M27.500 32h3a3 3 0 1 1-3 3z" fill="#ecb22e" />
    <path d="M16 28v3a3 3 0 1 1-3-3z" fill="#e01e5a" />
  </Big>
);
const Penguin = () => (
  <Big>
    <path d="M24 1c6 0 8 5 8 10 1 4 5 8 8 15 2 5 3 8 1 8l-3-1c-2 8-8 11-14 11s-12-3-14-11l-3 1c-2 0-1-3 1-8 3-7 7-11 8-15 0-5 2-10 8-10z" fill="#111" stroke="#555" strokeWidth=".6" />
    <ellipse cx="24" cy="29" rx="14" ry="14.500" fill="#fff" />
    <circle cx="20" cy="7.500" r="3.200" fill="#fff" />
    <circle cx="28" cy="7.500" r="3.200" fill="#fff" />
    <circle cx="20.500" cy="7.500" r="1.200" fill="#111" />
    <circle cx="27.500" cy="7.500" r="1.200" fill="#111" />
    <path d="m24 10 4 2.500-4 3-4-3z" fill="#f5a81c" />
    <circle cx="19" cy="24" r="6" fill="#f3c64a" stroke="#222" />
    <circle cx="30" cy="25" r="6.500" fill="#222" />
    <circle cx="22" cy="34" r="6.500" fill="#f7c83e" stroke="#222" />
    <path d="M2 39 9 36c0-3 4-4 5 0l3 8c-3 3-6 1-8 3zM46 39l-7-3c0-3-4-4-5 0l-3 8c3 3 6 1 8 3z" fill="#ffd65a" stroke="#8a6a10" strokeWidth=".6" />
  </Big>
);
const Chrome = () => (
  <Big>
    <circle cx="24" cy="24" r="22" fill="#fcc934" />
    <path d="M24 24 5 13a22 22 0 0 0 18 33l10-17z" fill="#109d58" />
    <path d="M5 13A22 22 0 0 1 43.500 14H24c-5 0-9 4-10 9z" fill="#db4437" />
    <circle cx="24" cy="24" r="10" fill="#f1f1f1" />
    <circle cx="24" cy="24" r="8" fill="#4285f4" />
  </Big>
);

const dock: { name: string; Icon: () => React.ReactElement; running?: boolean; active?: boolean }[] = [
  { name: "Firefox", Icon: Firefox, running: true },
  { name: "Thunderbird", Icon: Thunderbird },
  { name: "Files", Icon: Files },
  { name: "Rhythmbox", Icon: Rhythmbox },
  { name: "LibreOffice Writer", Icon: Writer, running: true, active: true },
  { name: "Software", Icon: Software },
  { name: "Help", Icon: HelpIcon },
  { name: "Slack", Icon: Slack },
  { name: "Penguin", Icon: Penguin },
  { name: "Chrome", Icon: Chrome, running: true },
];

const Dock = () => (
  <nav aria-label="Dock" className="flex w-[67px] shrink-0 flex-col bg-gradient-to-b from-[#563a3c] via-[#4b343a] to-[#3c2f34]">
    {dock.map(({ name, Icon, running, active }) => (
      <button
        key={name}
        type="button"
        aria-label={name}
        className={
          active
            ? "mx-0.5 my-px flex h-[62px] items-center rounded bg-white/20"
            : "mx-0.5 my-px flex h-[62px] items-center rounded"
        }
      >
        <span className={running ? "h-[5px] w-[5px] rounded-full bg-[#e95420]" : "h-[5px] w-[5px]"} />
        <span className="ml-0.5"><Icon /></span>
      </button>
    ))}
    <button type="button" aria-label="Show Applications" className="mb-4 mt-auto flex justify-center">
      <svg width="32" height="32" viewBox="0 0 32 32" fill="#f2f1f0" aria-hidden="true">
        {[4, 16, 28].map((y) => [4, 16, 28].map((x) => <circle key={x + "-" + y} cx={x} cy={y} r="3.200" />))}
      </svg>
    </button>
  </nav>
);

/* ---------- sidebar ---------- */

const Sidebar = () => (
  <aside className="flex w-10 shrink-0 flex-col items-center border-y border-[#b0afad] pt-3">
    <button type="button" aria-label="Sidebar Settings" className="flex h-4 items-center">
      <svg width="12" height="12" viewBox="0 0 12 12" aria-hidden="true">
        <path d="M0 2h6M0 5h6M0 8h4" stroke="#223" strokeWidth="1.200" />
        <path d="M4 7h6l-3 4z" fill="#223" />
      </svg>
    </button>
    <span className="mb-1 mt-[10px] h-px w-[22px] bg-[#d9d8d6]" />
    <button type="button" aria-label="Properties" className="flex h-[30px] items-center">
      <Ico>
        <path d="M7 7l10.500 11" stroke="#8a8c89" strokeWidth="5.500" />
        <path d="M3.500 1.500 6.500 5 5 7.500 1.500 5.500C1 9 4 11 7.500 10L10.500 7C11 3.500 8 .5 3.500 1.500zM20.500 23.500 18 20l1.500-2.500 3.500 2C23 15.500 20 14 17 15l-3 3c-.5 3.500 2.500 6 6.500 5.500z" fill="#f2f2f0" stroke="#8a8c89" />
        <path d="M7.500 7.500 17 17.500" stroke="#f2f2f0" strokeWidth="3.500" />
      </Ico>
    </button>
    <button type="button" aria-label="Page" className="mt-1 flex h-[34px] w-8 items-center justify-center rounded border border-[#b5b4b2]">
      <Ico>
        <path d="M3.500 1.500h12c3 0 5 2 5 5v16h-17z" fill="#f7f7f6" stroke="#8c8c8a" />
        <path d="M15.500 1.500c1 2 0 5-1 5 2-1 5-1 6 0" fill="#fff" stroke="#a0a09e" />
      </Ico>
    </button>
    <button type="button" aria-label="Styles" className="mt-0.5 flex h-8 items-center">
      <Ico>
        <path d="M4 1h19v6h-2c0-2-1-3-5-3v15h-5V4C7 4 6 5 6 7H4z" fill="#4a5052" />
        <path d="M.5 7v16.500h21z" fill="#7cc842" stroke="#3c8a0e" />
        <path d="M4.500 15.500v4.500h6z" fill="#eef7e6" stroke="#3c8a0e" />
      </Ico>
    </button>
    <button type="button" aria-label="Gallery" className="flex h-8 items-center">
      <Ico>
        <path d="m8 6 4-4 4 4" stroke="#777" strokeWidth="1.300" />
        <rect x="1" y="6" width="22" height="16" rx="1" fill="#e8a13c" stroke="#8f5400" />
        <rect x="4" y="9" width="16" height="10" fill="url(#sky)" stroke="#7a4a08" />
        <path d="M14 19v-4l-4-3M14 15l4-4" stroke="#221a10" />
      </Ico>
    </button>
    <button type="button" aria-label="Navigator" className="mt-1 flex h-9 items-center">
      <Ico>
        <circle cx="12" cy="12" r="10" fill="#f3f4f4" stroke="#7d807c" strokeWidth="2.500" />
        <path d="M12 4.500v15M4.500 12h15" stroke="#b9bbb9" />
        <path d="m7 6 6.500 4.500-3 3z" fill="#d8201f" />
        <path d="m17 18-6.500-4.500 3-3z" fill="#6a7ca8" />
      </Ico>
    </button>
  </aside>
);

/* ---------- status bar ---------- */

const Bar = () => <span className="h-4 w-px shrink-0 bg-[#9b9a98]" />;
const PageGlyph = () => <path d="M1.500 1.500h5l3 3v7h-8zM6.500 1.500v3h3" />;

const StatusBar = () => (
  <footer className="flex h-[22px] items-center border-t border-[#aeadab] text-xs text-[#4c4c4c]">
    <span className="w-[269px] pl-2.5">Page 1 of 1</span>
    <Bar />
    <span className="w-[330px] pl-2">0 words, 0 characters</span>
    <Bar />
    <span className="w-[285px] pl-2">Default Style</span>
    <Bar />
    <span className="w-[319px] text-center">English (India)</span>
    <Bar />
    <span className="w-[67px]" />
    <Bar />
    <span className="flex w-7 justify-center">
      <svg width="12" height="12" viewBox="0 0 12 12" aria-hidden="true">
        <path d="M0 2h8v8H0z" fill="#8f8e8c" />
        <path d="M9 .5h3M9 11.500h3M10.500 .5v11" stroke="#8f8e8c" />
      </svg>
    </span>
    <Bar />
    <span className="flex w-7 justify-center">
      <svg width="12" height="12" viewBox="0 0 12 12" fill="none" aria-hidden="true">
        <path d="M9 .5H.5v11H9V10" stroke="#8f8e8c" />
        <path d="M8.500 3v6M6 4.500l5 3M11 4.500l-5 3" stroke="#c4161c" strokeWidth="1.200" />
      </svg>
    </span>
    <Bar />
    <span className="w-7" />
    <Bar />
    <span className="flex-1" />
    <Bar />
    <span className="flex w-[75px] items-center justify-center gap-1 pt-0.5">
      <svg width="11" height="13" viewBox="0 0 11 13" fill="none" stroke="#4c4c4c" strokeWidth="1.400" aria-hidden="true"><PageGlyph /></svg>
      <svg width="21" height="13" viewBox="0 0 21 13" fill="none" stroke="#8f8e8c" aria-hidden="true">
        <PageGlyph />
        <g transform="translate(10 0)"><PageGlyph /></g>
      </svg>
      <svg width="18" height="13" viewBox="0 0 18 13" fill="none" stroke="#8f8e8c" aria-hidden="true">
        <path d="M1.500 4.500 4 1.500h10l2.500 3v7h-15zM9 1.500v10M4 1.500v3H1.500M14 1.500v3h2.500" />
      </svg>
    </span>
    <Bar />
    <button type="button" aria-label="Zoom out" className="ml-2.5 h-0.5 w-[9px] bg-[#8f8e8c]" />
    <span className="relative mx-1.5 flex w-[98px] items-center">
      <span className="absolute left-[29px] h-3 w-0.5 bg-[#b5b4b2]" />
      <span className="absolute left-[47px] h-3 w-0.5 bg-[#b5b4b2]" />
      <input
        type="range"
        aria-label="Zoom"
        defaultValue={64}
        className="relative h-3 w-full appearance-none bg-[linear-gradient(#b0afad,#b0afad)] bg-[length:100%_2px] bg-center bg-no-repeat [&::-webkit-slider-thumb]:h-[9px] [&::-webkit-slider-thumb]:w-[9px] [&::-webkit-slider-thumb]:appearance-none [&::-webkit-slider-thumb]:rounded-full [&::-webkit-slider-thumb]:border [&::-webkit-slider-thumb]:border-[#8f8e8c] [&::-webkit-slider-thumb]:bg-white"
      />
    </span>
    <button type="button" aria-label="Zoom in" className="mr-[7px]">
      <svg width="9" height="9" viewBox="0 0 9 9" aria-hidden="true">
        <path d="M0 4.500h9M4.500 0v9" stroke="#8f8e8c" strokeWidth="2" />
      </svg>
    </button>
    <Bar />
    <span className="w-[46px] pl-1.5">245%</span>
  </footer>
);

/* ---------- page ---------- */

const TopBar = () => (
  <header className="grid h-[27px] shrink-0 grid-cols-[67px_1fr_auto_1fr] items-center bg-gradient-to-b from-[#55524a] to-[#403f3a] text-[15px] leading-5 font-semibold text-[#dfdbd2]">
    <div className="col-span-2 flex items-center">
      <button type="button" className="ml-3">Activities</button>
      <button type="button" className="ml-5 flex items-center">
        <svg width="14" height="16" viewBox="0 0 14 16" aria-hidden="true">
          <path d="M1 1h7l5 5v9H1z" fill="#fff" stroke="#0e6aa4" />
          <path d="M9 0h5v5z" fill="#2a8cc8" />
          <path d="M3 7h6M3 9.500h8M3 12h8" stroke="#0e5f96" />
        </svg>
        <span className="ml-[7px]">LibreOffice Writer</span>
        <svg width="9" height="5" viewBox="0 0 9 5" className="ml-1.5" aria-hidden="true"><path d="M0 0h9L4.500 5z" fill="#dfdbd2" /></svg>
      </button>
    </div>
    <time>Tue 14:03</time>
    <div className="flex items-center justify-end gap-3 pr-4">
      <svg width="14" height="15" viewBox="0 0 14 15" fill="none" stroke="#dfdbd2" strokeWidth="1.700" aria-hidden="true">
        <path d="M0.500 4.500q6.500-5 13 0" opacity=".4" />
        <path d="M2.500 7q4.500-3 9 0M4 10q3-2 6 0" />
        <circle cx="7" cy="13" r="1.200" fill="#dfdbd2" />
      </svg>
      <svg width="17" height="14" viewBox="0 0 17 14" fill="none" stroke="#dfdbd2" strokeWidth="1.500" aria-hidden="true">
        <path d="M0 4.500h3L7 1v12L3 9.500H0z" fill="#dfdbd2" stroke="none" />
        <path d="M9 4.500q1.500 2.500 0 5M11.500 3q2.500 4 0 8M13.500 1q4 6 0 12" />
      </svg>
      <svg width="13" height="17" viewBox="0 0 13 17" fill="none" stroke="#dfdbd2" strokeWidth="2" aria-hidden="true">
        <path d="M1.500 3.500H4V1.500h5v2h2.500v12h-10z" />
        <path d="M4 9.500h5M4 12.500h5" strokeWidth="1.500" />
      </svg>
      <svg width="9" height="5" viewBox="0 0 9 5" aria-hidden="true"><path d="M0 0h9L4.500 5z" fill="#dfdbd2" /></svg>
    </div>
  </header>
);

const TitleBar = () => (
  <div className="grid h-7 grid-cols-[1fr_auto_1fr] items-center bg-gradient-to-b from-[#3c3b37] to-[#504d46]">
    <span />
    <h1 className="text-[15px] leading-5 font-semibold text-[#dfdbd2]">Untitled 1 - LibreOffice Writer</h1>
    <div className="flex justify-end gap-1 pr-[5px]">
      <button type="button" aria-label="Minimize" className="flex h-4 w-4 items-center justify-center rounded-full border border-[#33322e] bg-gradient-to-b from-[#8b8a85] to-[#64635e]">
        <svg width="8" height="8" viewBox="0 0 8 8" aria-hidden="true"><path d="M0 4.500h8" stroke="#33322e" /></svg>
      </button>
      <button type="button" aria-label="Maximize" className="flex h-4 w-4 items-center justify-center rounded-full border border-[#33322e] bg-gradient-to-b from-[#8b8a85] to-[#64635e]">
        <svg width="8" height="8" viewBox="0 0 8 8" fill="none" aria-hidden="true"><path d="M.5 1.500h7v5h-7z" stroke="#33322e" /></svg>
      </button>
      <button type="button" aria-label="Close" className="flex h-4 w-4 items-center justify-center rounded-full border border-[#33322e] bg-gradient-to-b from-[#f7845f] to-[#e0481a]">
        <svg width="6" height="6" viewBox="0 0 6 6" aria-hidden="true"><path d="m.5.5 5 5M5.500.5l-5 5" stroke="#4b1a0a" strokeWidth="1.200" /></svg>
      </button>
    </div>
  </div>
);

const menus = ["File", "Edit", "View", "Insert", "Format", "Styles", "Table", "Form", "Tools", "Window", "Help"];

const MenuBar = () => (
  <div className="flex h-6 items-center bg-[#504d46] text-[15px] leading-5 text-[#dfdbd2]">
    <nav className="flex flex-1 gap-[11px] pl-1.5" aria-label="Menu">
      {menus.map((m) => <button key={m} type="button">{m}</button>)}
    </nav>
    <button type="button" aria-label="Close Document" className="flex h-6 w-9 items-center justify-center bg-[#f2f1f0]">
      <svg width="6" height="6" viewBox="0 0 6 6" aria-hidden="true"><path d="m.5.5 5 5M5.500.5l-5 5" stroke="#333" /></svg>
    </button>
  </div>
);

export default function App() {
  return (
    <div className="flex min-h-screen flex-col overflow-hidden bg-[#f2f1f0] font-['Noto_Sans','Open_Sans',sans-serif]">
      <Defs />
      <TopBar />
      <div className="flex flex-1">
        <Dock />
        <main className="flex min-w-0 flex-1 flex-col">
          <TitleBar />
          <MenuBar />
          <StandardBar />
          <FormatBar />
          <div className="flex flex-1">
            <div className="flex min-w-0 flex-1 flex-col pt-1">
              <Ruler />
              <div className="h-[34px] border-b-2 border-[#c6c5c3]" />
              <section className="flex flex-1 bg-white pb-[25px] pl-[23px] pr-[26px] pt-[27px]">
                <div className="relative flex-1 rounded-[132px] border border-[#3465a4] bg-[linear-gradient(155deg,#fce94f,#c4a000)] pt-[139px] text-center font-['Liberation_Serif','Noto_Sans_Devanagari',serif] [text-shadow:4px_4px_0_#000]">
                  <span className="absolute left-[851px] top-[248px] h-11 w-px bg-[#204a87]" />
                  <p className="whitespace-pre text-[85px] leading-[98px] text-[#ce181e]">{"SUBJECT – HINDI\u00a0"}</p>
                  <p className="text-[85px] leading-[98px] text-[#b8131a]">CLASS – 9,10</p>
                  <p className="whitespace-pre text-[84px] leading-[106px] text-[#930b0e]" lang="hi">
                    व्याकरण<span className="text-[108px] leading-[0px]"> – </span>भाषा (खंड<span className="text-[108px] leading-[0px]"> -</span>'क<span className="text-[108px] leading-[0px]">′</span>)
                  </p>
                  <p className="mt-2.5 text-[105px] leading-[116px] text-[#5c0606]">(PART 1)</p>
                </div>
              </section>
              <div className="h-[7px]">
                <div className="ml-[122px] mr-[91px] h-[7px] bg-[#f28f68]" />
              </div>
            </div>
            <div className="w-[7px] pt-[5px]">
              <div className="h-[249px] bg-[#f28f68]" />
            </div>
            <div className="mb-0.5 flex">
              <div className="flex w-[7px] flex-col justify-center border border-[#b0afad]">
                <span className="-mx-px flex h-[73px] items-center justify-center bg-[#93918c]">
                  <svg width="5" height="7" viewBox="0 0 5 7" aria-hidden="true"><path d="M0 0v7l5-3.500z" fill="#f2f1f0" /></svg>
                </span>
              </div>
              <Sidebar />
            </div>
          </div>
          <DrawBar />
          <StatusBar />
        </main>
      </div>
    </div>
  );
}
